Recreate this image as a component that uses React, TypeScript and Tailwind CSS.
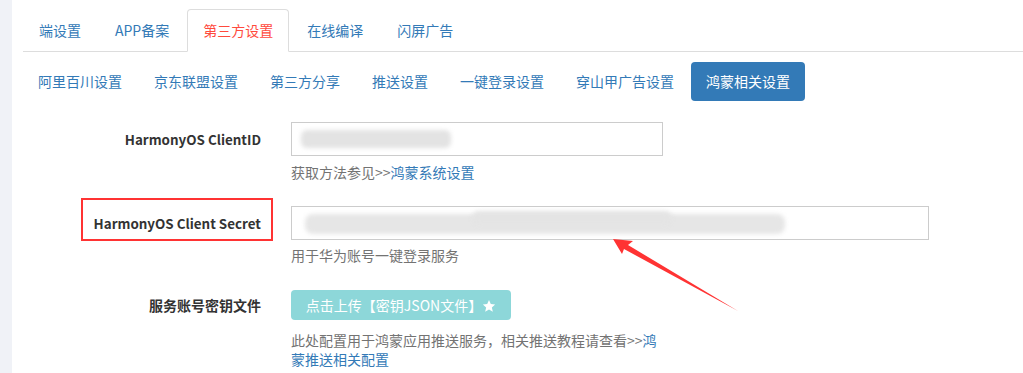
import React from 'react';

const TOP_TABS = ['端设置', 'APP备案', '第三方设置', '在线编译', '闪屏广告'];
const SUB_TABS = ['阿里百川设置', '京东联盟设置', '第三方分享', '推送设置', '一键登录设置', '穿山甲广告设置', '鸿蒙相关设置'];

const FONT = 'font-["Noto_Sans_CJK_SC","Microsoft_YaHei",sans-serif]';

function Star() {
  return (
    <svg width="14" height="14" viewBox="0 0 24 24" className="inline-block -mt-[3px]">
      <path d="M12 1.8l3.1 6.9 7.4.7-5.6 5 1.7 7.4L12 17.9l-6.6 3.9 1.7-7.4-5.6-5 7.4-.7z" fill="#fff" />
    </svg>
  );
}

export default function App() {
  return (
    <div className={`relative flex min-h-[373px] bg-white text-[14px] ${FONT}`}>
      <div className="w-3 shrink-0 bg-[#f0f2f7]" />

      <div className="flex-1 pl-[11px] pt-[9px]">
        {/* top tabs */}
        <ul className="flex border-b border-[#ddd]">
          {TOP_TABS.map((t, i) => (
            <li
              key={t}
              className={
                i === 2
                  ? 'mr-[2px] -mb-px rounded-t-[4px] border border-[#ddd] border-b-white bg-white px-[15px] py-[10px] leading-5 text-[#ff4a3d]'
                  : 'mr-[2px] border border-transparent px-[15px] py-[10px] leading-5 text-[#337ab7]'
              }
            >
              {t}
            </li>
          ))}
        </ul>

        {/* sub tabs */}
        <ul className="mt-[10px] flex gap-[2px]">
          {SUB_TABS.map((t, i) => (
            <li
              key={t}
              className={
                i === SUB_TABS.length - 1
                  ? 'h-[39px] rounded-[4px] bg-[#337ab7] px-[15px] leading-[39px] text-white'
                  : 'h-[39px] px-[15px] leading-[39px] text-[#337ab7]'
              }
            >
              {t}
            </li>
          ))}
        </ul>

        {/* form */}
        <div className="mt-[21px]">
          <div className="mb-[24px] flex">
            <div className="flex h-[34px] w-[253px] shrink-0 items-center justify-end pr-[15px] text-[13.4px] font-bold text-[#333]">
              HarmonyOS ClientID
            </div>
            <div className="pl-[15px]">
              <div className="relative h-[34px] w-[372px] border border-[#ccc] bg-white">
                <div className="absolute left-[9px] top-[7px] h-[18px] w-[150px] rounded-[6px] bg-[#e3e3e3] blur-[2px]" />
              </div>
              <div className="mt-[6px] leading-5 text-[#737373]">
                获取方法参见&gt;&gt;<span className="text-[#337ab7]">鸿蒙系统设置</span>
              </div>
            </div>
          </div>

          <div className="mb-[25px] flex">
            <div className="relative flex h-[34px] w-[253px] shrink-0 items-center justify-end pr-[15px] text-[13.4px] font-bold text-[#333]">
              HarmonyOS Client Secret
              <div className="absolute left-[58px] top-[-8px] h-[43px] w-[192px] border-2 border-[#f33]" />
            </div>
            <div className="pl-[15px]">
              <div className="relative h-[34px] w-[638px] border border-[#ccc] bg-white">
                <div className="absolute left-[13px] top-[7px] h-[20px] w-[480px] rounded-[8px] bg-[#e6e6e6] blur-[2px]" />
                <div className="absolute left-[180px] top-[4px] h-[14px] w-[200px] rounded-full bg-[#e4e4e4] blur-[2px]" />
              </div>
              <div className="mt-[5px] leading-5 text-[#737373]">用于华为账号一键登录服务</div>
            </div>
          </div>

          <div className="flex">
            <div className="flex h-[30px] w-[253px] shrink-0 items-center justify-end pr-[15px] font-bold text-[#333]">
              服务账号密钥文件
            </div>
            <div className="pl-[15px]">
              <button className="h-[30px] w-[220px] rounded-[4px] bg-[#8dd7d9] text-white leading-[30px]">
                点击上传【密钥JSON文件】<Star />
              </button>
              <div className="mt-[11px] w-[372px] leading-[19px] text-[#737373]">
                此处配置用于鸿蒙应用推送服务，相关推送教程请查看&gt;&gt;<span className="text-[#337ab7]">鸿蒙推送相关配置</span>
              </div>
            </div>
          </div>
        </div>
      </div>

      {/* annotation arrow */}
      <svg className="pointer-events-none absolute left-0 top-0" width="1023" height="373">
        <polygon points="613,239 633,241 628,245 738,311 624,249 622,254" fill="#f33" />
      </svg>
    </div>
  );
}
